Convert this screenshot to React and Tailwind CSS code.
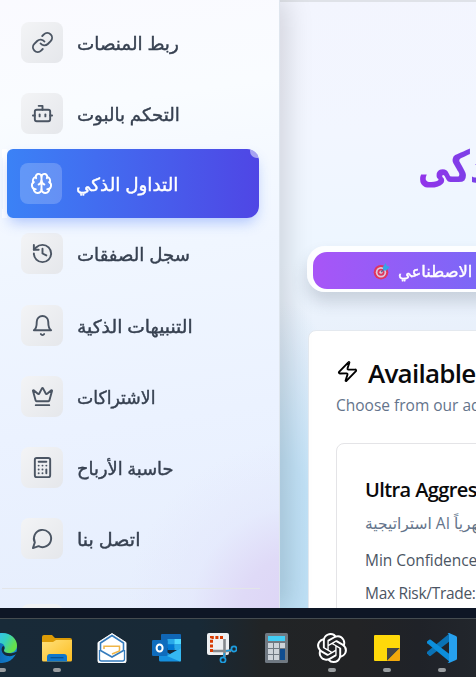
import React from "react";
import { Link, Bot, Brain, History, Crown, Calculator, Zap } from "lucide-react";
import { SiOpenai } from "react-icons/si";

const Bell = (p) => (
  <svg {...p} viewBox="0 0 24 24" fill="none" stroke="currentColor" strokeWidth="2" strokeLinecap="round" strokeLinejoin="round">
    <path d="M6 8a6 6 0 0 1 12 0c0 7 3 9 3 9H3s3-2 3-9" />
    <path d="M10.3 21a1.94 1.94 0 0 0 3.4 0" />
  </svg>
);

const Message = (p) => (
  <svg {...p} viewBox="0 0 24 24" fill="none" stroke="currentColor" strokeWidth="2" strokeLinecap="round" strokeLinejoin="round">
    <path d="M7.9 20A9 9 0 1 0 4 16.1L2 22Z" />
  </svg>
);

const items = [
  { label: "ربط المنصات", Icon: Link, fit: "scale-x-[1.02]" },
  { label: "التحكم بالبوت", Icon: Bot, fit: "scale-x-[1.01]" },
  { label: "التداول الذكي", Icon: Brain, active: true, fit: "scale-x-[1.02]" },
  { label: "سجل الصفقات", Icon: History, fit: "scale-x-[1.01]", row: "-mt-px" },
  { label: "التنبيهات الذكية", Icon: Bell, fit: "scale-x-[1.04]", row: "mt-[2px]" },
  { label: "الاشتراكات", Icon: Crown, fit: "scale-x-[0.96]" },
  { label: "حاسبة الأرباح", Icon: Calculator, fit: "scale-x-[0.99]" },
  { label: "اتصل بنا", Icon: Message, fit: "scale-x-[1.06]" },
];

function NavItem({ label, Icon, active, fit, row = "" }) {
  if (active) {
    return (
      <div className="-mt-px flex h-[70.86px] items-center pl-[2px]">
        <div className="flex h-[69px] w-px flex-col justify-between">
          <div className="h-[9px] bg-white" />
          <div className="h-[9px] bg-white" />
        </div>
        <div className="h-[69px] w-1 bg-white" />
        <div className="relative flex h-[69px] w-[252px] items-center rounded-r-xl rounded-l-[6px] bg-[linear-gradient(90deg,#3b82f6,#4f46e5)] pl-[13px] shadow-[0_7px_14px_-3px_rgba(59,110,246,0.38)]">
          <div className="absolute inset-0 overflow-hidden rounded-r-xl">
            <div className="absolute -top-[5px] -right-[5px] h-[14px] w-[14px] rounded-full bg-white/50" />
          </div>
          <div className="flex h-[41px] w-[42px] items-center justify-center rounded-lg bg-white/20 text-white">
            <Icon className="h-[23px] w-[23px]" />
          </div>
          <span dir="rtl" className={"mt-[2px] ml-[14px] origin-left text-[18px] whitespace-nowrap text-white [-webkit-text-stroke:0.4px_currentColor] " + fit}>{label}</span>
        </div>
      </div>
    );
  }
  return (
    <div className={"flex h-[70.86px] items-center pl-[21px] " + row}>
      <div className="flex h-[41px] w-[42px] items-center justify-center rounded-lg bg-[linear-gradient(135deg,#f3f4f6,#e5e7eb)] text-[#4b5563]">
        <Icon className="h-[23px] w-[23px]" />
      </div>
      <span dir="rtl" className={"mt-[2px] ml-[14px] origin-left text-[18px] whitespace-nowrap text-[#374151] [-webkit-text-stroke:0.4px_currentColor] " + fit}>{label}</span>
    </div>
  );
}

function Sidebar() {
  return (
    <aside className="z-10 h-[608px] w-[280px] shrink-0 overflow-hidden border-r border-[#dfe6ee] bg-[radial-gradient(circle_at_300px_615px,#dcd3f5_0px,#dfdaf7_60px,rgba(226,228,251,0.45)_110px,rgba(232,239,254,0)_175px),linear-gradient(172deg,#fafaff_0%,#f9fcff_18%,#f0f6ff_42%,#ebf2ff_68%,#e6eefd_100%)] pt-[7px] shadow-[8px_0_24px_rgba(0,0,0,0.13)]">
      {items.map((i) => (
        <NavItem key={i.label} {...i} />
      ))}
      <div className="mt-[14px] ml-[2px] h-px w-[258px] bg-[#e3e5e8]" />
      <div className="mt-[15px] ml-[21px] h-[41px] w-[42px] rounded-lg bg-[#f0f2f5]" />
    </aside>
  );
}

function Target() {
  return (
    <svg className="h-[18px] w-[18px] shrink-0" viewBox="0 0 18 18">
      <circle cx="8" cy="10.2" r="7.3" fill="#e0365f" />
      <circle cx="8" cy="10.2" r="5.2" fill="#dcc9dd" />
      <circle cx="8" cy="10.2" r="3.5" fill="#e0365f" />
      <circle cx="8" cy="10.2" r="1.6" fill="#dcc9dd" />
      <path d="M8 10.2 11.5 6.7" stroke="#53658f" strokeWidth="1.2" />
      <path d="M9.7 5.2 12.7 1l.9 2.8L17 5l-3.7 3.5-3 .1Z" fill="#36a3e8" />
    </svg>
  );
}

function Main() {
  return (
    <main className="h-[608px] w-[196px] shrink-0 overflow-hidden bg-[radial-gradient(ellipse_90px_290px_at_0px_590px,#b9ddf3_0%,#c0e0f5_45%,rgba(207,229,247,0)_100%),linear-gradient(175deg,#f3f5fe_0%,#f2f6ff_22%,#edf6ff_42%,#e8effa_58%,#dcebf8_100%)]">
      <div className="h-[2px] bg-[#dfe2e8]" />
      <div className="pt-[133px] pl-[138px]">
        <h1 dir="rtl" className="inline-block h-[64px] origin-left scale-x-[0.74] bg-[linear-gradient(90deg,#9333ea,#6d48e6_40%,#2563eb)] bg-clip-text text-[44px] leading-[60px] font-bold whitespace-nowrap text-transparent">التداول الذكى</h1>
      </div>
      <div className="mt-[47px] ml-[27px] h-[46px] w-[412px] rounded-[18px] bg-white/90 p-[6px] pb-[3px] shadow-[0_10px_16px_rgba(60,70,90,0.2)]">
        <div className="flex h-[37px] items-center rounded-[14px] bg-[linear-gradient(90deg,#a855f7,#3b82f6)] pl-[60px]">
          <Target />
          <span dir="rtl" className="ml-[7px] origin-left scale-x-[1.02] text-[16px] whitespace-nowrap text-white [-webkit-text-stroke:0.4px_currentColor]">بالذكاء الاصطناعي</span>
        </div>
      </div>
      <section className="mt-[38px] ml-[28px] h-[300px] w-[400px] rounded-lg border border-[#e4e9ef] bg-white pl-[27px]">
        <div className="mt-[24px] flex h-[36px] items-center">
          <Zap className="-mt-[4px] h-[23px] w-[23px] shrink-0 text-black" />
          <h2 className="-mt-[1px] ml-[9px] text-[26px] leading-9 font-semibold tracking-[-0.75px] whitespace-nowrap text-[#09090b]">Available Strategies</h2>
        </div>
        <p className="mt-[2px] text-[15.5px] leading-6 whitespace-nowrap text-[#64748b]">Choose from our advanced</p>
        <div className="mt-[26px] h-[220px] w-[340px] rounded-lg border border-[#e4e4e7] pl-[28px]">
          <h3 className="mt-[32px] text-[20px] leading-7 font-semibold tracking-[-0.6px] whitespace-nowrap text-[#09090b]">Ultra Aggressive</h3>
          <p className="mt-[7px] text-[15.5px] leading-6 whitespace-nowrap text-[#64748b]">استراتيجية AI شهرياً</p>
          <p className="mt-[13px] text-[15.5px] leading-6 tracking-[-0.05px] whitespace-nowrap text-[#4b5563]">Min Confidence: 60%</p>
          <p className="mt-[9px] text-[15.5px] leading-6 tracking-[-0.3px] whitespace-nowrap text-[#4b5563]">Max Risk/Trade: 5%</p>
        </div>
      </section>
    </main>
  );
}

function Edge() {
  return (
    <svg className="h-[30px] w-[30px]" viewBox="0 0 30 30">
      <defs>
        <linearGradient id="edgeA" x1="0" x2="1" y1="0" y2=".4"><stop offset=".3" stopColor="#35c1f1" /><stop offset=".65" stopColor="#35cfc0" /><stop offset="1" stopColor="#66e04a" /></linearGradient>
        <linearGradient id="edgeB" x1="0" x2="1"><stop stopColor="#0c59a4" /><stop offset="1" stopColor="#1389d8" /></linearGradient>
      </defs>
      <circle cx="15" cy="15" r="15" fill="url(#edgeB)" />
      <path d="M0 14C1 5 8 0 15 0c9 0 15 6 15 12.500 0 5-4 7.500-8 7.500-5 0-6-1.500-5-3 2-3 0-7-5-7-6 0-11 3-12 4Z" fill="url(#edgeA)" />
      <path d="M16 13c-3 3-1 9 5 10 3 .5 6-.5 7.500-1.500L30 20c1-2 0-1-3-.3-7 1.500-10.500-.7-10-2.700 1-2 .5-4-1-4Z" fill="#172a38" />
    </svg>
  );
}

function Folder() {
  return (
    <svg className="h-[30px] w-[30px]" viewBox="0 0 30 30">
      <defs>
        <linearGradient id="folder" x1="0" y1="0" x2="1" y2="1"><stop stopColor="#ffe07a" /><stop offset="1" stopColor="#fcbd20" /></linearGradient>
      </defs>
      <path d="M0 4a2 2 0 0 1 2-2h8l3 3h15a2 2 0 0 1 2 2v8H0Z" fill="#dc9b06" />
      <path d="M0 9h11l3-2h16v20a1.500 1.500 0 0 1-1.500 1.500h-27A1.500 1.500 0 0 1 0 27Z" fill="url(#folder)" />
      <path d="M5 28.500V24a3 3 0 0 1 3-3h14a3 3 0 0 1 3 3v4.500Z" fill="#1077cc" />
      <path d="M8.500 24.700h13" stroke="#0b4f8b" strokeWidth="1.200" />
    </svg>
  );
}

function Mail() {
  return (
    <svg className="h-[30px] w-[30px]" viewBox="0 0 30 30" fill="none">
      <path d="M15 0.500 29 9.500V28a2 2 0 0 1-2 2H3a2 2 0 0 1-2-2V9.500Z" fill="#fff" stroke="#fff" strokeLinejoin="round" />
      <path d="M15 2.500 3.500 10v7.500L15 24l11.500-6.500V10Z" stroke="#357cbd" strokeWidth="1.600" />
      <path d="M2.500 17v9q0 2 2 2h21q2 0 2-2v-9" stroke="#357cbd" strokeWidth="1.300" />
      <path d="M7 16v-2.700h15.500V18L15 21" stroke="#efb548" strokeWidth="1.500" />
    </svg>
  );
}

function Outlook() {
  return (
    <svg className="h-[30px] w-[30px]" viewBox="0 0 30 30">
      <path d="M9 2a1 1 0 0 1 1-1h18a1 1 0 0 1 1 1v13H9Z" fill="#1066b5" />
      <path d="M15.500 6h6.800v5.500h-6.800Z" fill="#28a8ea" />
      <path d="M22.300 6H29v5.500h-6.700Z" fill="#50d9ff" />
      <path d="M15.500 11.500h6.800V17h-6.800Z" fill="#0078d4" />
      <path d="M22.300 11.500H29V17h-6.700Z" fill="#28a8ea" />
      <path d="M7 15l11 6 11-6v12a1.500 1.500 0 0 1-1.500 1.500H8.500A1.500 1.500 0 0 1 7 27Z" fill="#1590df" />
      <path d="m29 15-14 8 13 5.500q1 0 1-1.500Z" fill="#35b8f1" />
      <rect y="7" width="15.500" height="16" rx="1.300" fill="#0f6cbd" />
      <ellipse cx="7.600" cy="15" rx="3" ry="3.500" fill="none" stroke="#fff" strokeWidth="2" />
    </svg>
  );
}

function Snip() {
  return (
    <svg className="h-[30px] w-[30px]" viewBox="0 0 30 30" fill="none">
      <rect width="22" height="22" rx="2" fill="#eef0f2" />
      <path d="M4.500 19V4.500H17" stroke="#d83b01" strokeWidth="3" strokeDasharray="3 1.600" />
      <path d="M17.500 6v18M6 18h18" stroke="#85898d" strokeWidth="2.600" />
      <circle cx="27" cy="16" r="2.600" stroke="#1d9de0" strokeWidth="1.700" />
      <circle cx="16" cy="27" r="2.600" stroke="#1d9de0" strokeWidth="1.700" />
      <path d="m19 18 6-1.200M17.500 20l-.800 4.500" stroke="#1d9de0" strokeWidth="1.600" />
    </svg>
  );
}

function Calc() {
  return (
    <svg className="h-[30px] w-[30px]" viewBox="0 0 30 30">
      <rect x="3" width="23" height="30" rx="1.500" fill="#707982" />
      <rect x="6" y="3" width="17" height="5" fill="#42cdf5" />
      {[10, 16, 22].map((y) =>
        [6, 12, 18].map((x) => (y > 10 && x > 17 ? null : <rect key={x + "-" + y} x={x} y={y} width="5" height="5" fill="#cdd3d9" />))
      )}
      <rect x="18" y="16" width="5" height="11" fill="#0f4d90" />
    </svg>
  );
}

function Notes() {
  return (
    <svg className="h-[30px] w-[30px]" viewBox="0 0 30 30">
      <path d="M2 3a1 1 0 0 1 1-1h24a1 1 0 0 1 1 1v13L16 28H3a1 1 0 0 1-1-1Z" fill="#ffd90a" />
      <path d="M15 28V15h13Z" fill="#454545" />
      <path d="M15 28 28 15v12a1 1 0 0 1-1 1Z" fill="#f3a90c" />
    </svg>
  );
}

function Code() {
  return (
    <svg className="h-[30px] w-[30px]" viewBox="0 0 30 30">
      <path d="M0 20.500 2.200 22.700q.8.500 1.600 0L23 8V0L.2 18.700q-.8.800-.2 1.800Z" fill="#0a72b5" />
      <path d="M0 8.500 2.200 6.700q.8-.5 1.600 0L23 21.500V29L.2 10.300Q-.6 9.500 0 8.500Z" fill="#0c8edb" />
      <path d="M22 0l7 3q1 .5 1 1.500v21q0 1-1 1.500l-7 3q-1 .2-1.500-.5 1.500.5 1.500-1.500V2q0-2-1.500-1.500Q21-.2 22 0Z" fill="#26a0ee" />
    </svg>
  );
}

const apps = [
  { Icon: Edge, open: true },
  { Icon: Folder, open: true },
  { Icon: Mail },
  { Icon: Outlook },
  { Icon: Snip },
  { Icon: Calc },
  { Icon: () => <SiOpenai className="h-[30px] w-[30px] text-white" />, open: true },
  { Icon: Notes, open: true },
  { Icon: Code, open: true },
];

function Taskbar() {
  return (
    <footer className="h-[69px] shrink-0">
      <div className="h-[10px] bg-[#0e1625]" />
      <div className="h-[59px] overflow-hidden border-t border-[#454c50] bg-[linear-gradient(90deg,#182a38_0%,#182936_42%,#212426_55%,#222325_75%,#1f2228_88%,#22262c_100%)]">
        <div className="-ml-[25.5px] flex pt-[14px]">
          {apps.map(({ Icon, open }, i) => (
            <div key={i} className="flex w-[55px] shrink-0 flex-col items-center">
              <Icon />
              {open && <div className="mt-[5px] h-1 w-2 rounded-full bg-[#999da0]" />}
            </div>
          ))}
        </div>
      </div>
    </footer>
  );
}

export default function App() {
  return (
    <div className="flex h-[677px] w-[476px] flex-col overflow-hidden font-['Open_Sans','Noto_Sans','DejaVu_Sans',sans-serif]">
      <div className="flex h-[608px] shrink-0 overflow-hidden">
        <Sidebar />
        <Main />
      </div>
      <Taskbar />
    </div>
  );
}
